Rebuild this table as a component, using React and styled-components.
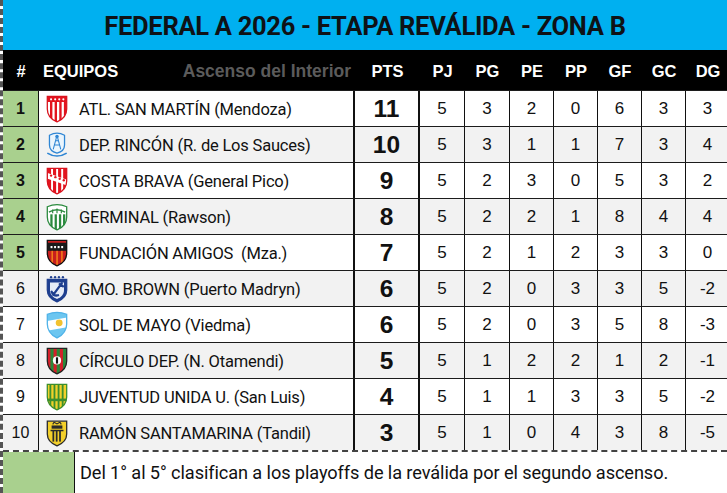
import React from "react";
import styled, { createGlobalStyle } from "styled-components";

const GlobalStyle = createGlobalStyle`
  html, body { margin: 0; padding: 0; background: #ffffff; }
  * { box-sizing: border-box; }
`;

const COLS = "36px 316px 65px 45px 45px 44px 44px 44px 44px 44px";

const Board = styled.div`
  width: 727px;
  height: 493px;
  display: flex;
  flex-direction: column;
  background: #ffffff;
  overflow: hidden;
  border-left: 3px dashed #555;
`;

const TitleBar = styled.div`
  height: 50px;
  background: #00b0f0;
  display: flex;
  align-items: center;
  justify-content: center;
  font-family: "Roboto", "Liberation Sans", sans-serif;
  font-weight: 700;
  font-size: 25.5px;
  letter-spacing: -0.3px;
  color: #0f1216;
  padding-top: 2px;
`;

const HeaderRow = styled.div`
  height: 40px;
  background: #000000;
  display: grid;
  grid-template-columns: ${COLS};
  align-items: center;
  font-family: "Liberation Sans", Arial, sans-serif;
  font-weight: 700;
  font-size: 16.5px;
  color: #ffffff;
`;

const HeadCell = styled.div`
  text-align: center;
  padding-top: 2px;
`;

const HeadTeam = styled.div`
  display: flex;
  justify-content: space-between;
  align-items: center;
  padding: 2px 4px 0 4px;
`;

const Muted = styled.span`
  color: #5b5b5b;
  font-size: 17.5px;
`;

const Row = styled.div`
  height: 36px;
  display: grid;
  grid-template-columns: ${COLS};
  background: ${(p) => (p.$even ? "#f2f2f2" : "#ffffff")};
  border-top: 1px solid #1c1c1c;
`;

const Cell = styled.div`
  display: flex;
  align-items: center;
  justify-content: center;
  border-right: 1px solid #111;
  font-family: "Liberation Sans", Arial, sans-serif;
  font-size: 17px;
  color: #111;
  padding-top: 1px;
`;

const PosCell = styled(Cell)`
  background: ${(p) => (p.$top ? "#a9d08e" : "transparent")};
  font-weight: ${(p) => (p.$top ? 700 : 400)};
  font-size: 16px;
`;

const TeamCell = styled(Cell)`
  justify-content: flex-start;
  padding-left: 6px;
  border-right: 2px solid #111;
  font-family: "Roboto", "Liberation Sans", sans-serif;
  font-size: 16.5px;
  letter-spacing: -0.2px;
  gap: 10px;
`;

const TeamName = styled.span`
  white-space: pre;
`;

const PtsCell = styled(Cell)`
  font-weight: 700;
  font-size: 24.5px;
  border-right: 2px solid #111;
`;

const CrestBox = styled.div`
  width: 24px;
  height: 30px;
  display: flex;
  align-items: center;
  justify-content: center;
  flex-shrink: 0;
  & > svg { width: 22px; height: 28px; flex-shrink: 0; }
`;

const Footer = styled.div`
  flex: 1;
  display: grid;
  grid-template-columns: 72px 1fr;
  border-top: 2px dashed #444;
`;

const FooterSwatch = styled.div`
  background: #a9d08e;
  border-right: 1px solid #111;
`;

const FooterText = styled.div`
  display: flex;
  align-items: center;
  padding-left: 5px;
  font-family: "Roboto", "Liberation Sans", sans-serif;
  font-size: 18.2px;
  letter-spacing: -0.1px;
  color: #111;
`;

const SHIELD = "M1 1.2 H19 V13 C19 19.5 15 23 10 25 C5 23 1 19.5 1 13 Z";
const SHIELD_ROUND = "M1 3.5 Q10 -0.5 19 3.5 V13 C19 19.5 15 23 10 25 C5 23 1 19.5 1 13 Z";

function Stripes({ color, xs, y = 0, h = 26, w = 2 }) {
  return xs.map((x) => <rect key={x} x={x} y={y} width={w} height={h} fill={color} />);
}

function Crest({ kind }) {
  const id = `clip-${kind}`;
  let body = null;
  let outline = "#111";
  let shape = SHIELD;
  switch (kind) {
    case 1:
      outline = "#d9131e";
      body = (
        <>
          <rect width="20" height="26" fill="#fff" />
          <Stripes color="#e3141f" xs={[3.5, 7.8, 12.1, 16.4]} w={2.2} />
          <rect width="20" height="6.5" fill="#e3141f" />
          {[4.5, 8.3, 12.1, 15.9].map((x) => (
            <circle key={x} cx={x} cy="4" r="1" fill="#fff" />
          ))}
        </>
      );
      break;
    case 2:
      outline = "#2f86d4";
      shape = "M3 4 Q10 0 17 4 V13 C17 17 14 19.5 10 20.5 C6 19.5 3 17 3 13 Z";
      body = (
        <>
          <rect width="20" height="26" fill="#eaf5fd" />
          <path d="M10 4 L6.5 17 M10 4 L13.5 17 M7.5 13 H12.5 M8.5 9 H11.5" stroke="#2f86d4" strokeWidth="1" fill="none" />
          <circle cx="10" cy="5" r="1.6" fill="#2f86d4" />
        </>
      );
      break;
    case 3:
      outline = "#d9131e";
      body = (
        <>
          <rect width="20" height="26" fill="#e3141f" />
          <Stripes color="#fff" xs={[4.5, 9.2, 13.9]} w={1.8} />
          <path d="M0 5 L20 12 L20 17.5 L0 10.5 Z" fill="#fff" />
          {[4.5, 8.5, 12.5, 16.3].map((x, i) => (
            <circle key={x} cx={x} cy={8 + i * 1.45} r="1.1" fill="#e3141f" />
          ))}
        </>
      );
      break;
    case 4:
      outline = "#2b8a3e";
      shape = SHIELD_ROUND;
      body = (
        <>
          <rect width="20" height="26" fill="#fff" />
          <Stripes color="#2b8a3e" xs={[3.8, 7.8, 11.8, 15.6]} y={10.5} h={16} w={2.1} />
          <path d="M2.5 8.5 Q10 4 17.5 8.5" stroke="#2b8a3e" strokeWidth="1.3" fill="none" />
          <path d="M6 6 V9.5 M10 5.2 V9.5 M14 6 V9.5" stroke="#2b8a3e" strokeWidth="1.1" />
        </>
      );
      break;
    case 5:
      outline = "#111";
      body = (
        <>
          <rect width="20" height="26" fill="#1a1a1a" />
          <rect y="11" width="20" height="15" fill="#c81e1e" />
          <Stripes color="#f27a1a" xs={[4.8, 9.3, 13.8]} y={11} h={15} w={1.5} />
          <rect y="6" width="20" height="3" fill="#1a1a1a" />
          {[4, 7.3, 10.6, 13.9].map((x) => (
            <rect key={x} x={x} y="6.5" width="1.8" height="2" fill="#fff" />
          ))}
          <rect y="1" width="20" height="2.5" fill="#c81e1e" />
        </>
      );
      break;
    case 6:
      outline = "#1f3f8f";
      shape = "M1 4 H19 V14 C19 19.5 15 23 10 25 C5 23 1 19.5 1 14 Z";
      body = (
        <>
          <rect width="20" height="26" fill="#1f3f8f" />
          <path d="M3.5 7 H16.5 V14 C16.5 18.5 13.5 21 10 22.3 C6.5 21 3.5 18.5 3.5 14 Z" fill="#e6ecf7" />
          <path d="M14.5 7.5 L6.5 18.5 M5 15.5 Q7 20 11 18.8 M12.5 8.5 L15.5 10.5" stroke="#1f3f8f" strokeWidth="2.1" fill="none" strokeLinecap="round" />
        </>
      );
      break;
    case 7:
      outline = "#4fb2e8";
      shape = "M1 3 Q10 -0.5 19 3 V12 C19 18.5 15 22.5 10 25 C5 22.5 1 18.5 1 12 Z";
      body = (
        <>
          <rect width="20" height="26" fill="#6cc6f0" />
          <path d="M0 9.5 L20 6 L20 15 L0 18.5 Z" fill="#ffffff" />
          <circle cx="12" cy="11" r="3.2" fill="#f2c230" />
        </>
      );
      break;
    case 8:
      outline = "#222";
      body = (
        <>
          <rect width="20" height="26" fill="#2a8a3a" />
          <Stripes color="#d3202a" xs={[1, 6.8, 12.6]} w={2.9} />
          <circle cx="10" cy="12.5" r="3.8" fill="#fff" />
          <rect x="9" y="9.6" width="2" height="5.8" fill="#111" />
        </>
      );
      break;
    case 9:
      outline = "#3c8f2e";
      body = (
        <>
          <rect width="20" height="26" fill="#f1d12b" />
          <Stripes color="#3c8f2e" xs={[3, 6.8, 10.6, 14.4]} w={1.7} />
          <rect y="14.5" width="20" height="2.4" fill="#3c8f2e" />
        </>
      );
      break;
    case 10:
      outline = "#2a2a2a";
      shape = "M1 2 H19 V14 C19 19.5 15 23 10 25 C5 23 1 19.5 1 14 Z";
      body = (
        <>
          <rect width="20" height="26" fill="#f3cf2a" />
          <rect x="5" y="6" width="10" height="3" fill="#2a2a2a" />
          <path d="M6 5 L7.3 3 L10 4.5 L12.7 3 L14 5" stroke="#2a2a2a" strokeWidth="1" fill="none" />
          <Stripes color="#2a2a2a" xs={[5.8, 8.9, 12]} y={11} h={10} w={1.6} />
          <rect x="4" y="10" width="12" height="1.4" fill="#2a2a2a" />
        </>
      );
      break;
    default:
      break;
  }
  return (
    <svg width="22" height="28" viewBox="0 0 20 26" aria-hidden="true">
      <defs>
        <clipPath id={id}>
          <path d={shape} />
        </clipPath>
      </defs>
      <g clipPath={`url(#${id})`}>{body}</g>
      <path d={shape} fill="none" stroke={outline} strokeWidth="1.2" />
      {kind === 2 && (
        <path d="M1 20.5 Q10 26 19 20.5" fill="none" stroke="#2f86d4" strokeWidth="1.5" />
      )}
      {kind === 6 &&
        [4.5, 8.2, 11.8, 15.5].map((x) => (
          <circle key={x} cx={x} cy="2" r="1.1" fill="#1f3f8f" />
        ))}
    </svg>
  );
}

const TEAMS = [
  ["ATL. SAN MARTÍN (Mendoza)", 11, 5, 3, 2, 0, 6, 3, 3],
  ["DEP. RINCÓN (R. de Los Sauces)", 10, 5, 3, 1, 1, 7, 3, 4],
  ["COSTA BRAVA (General Pico)", 9, 5, 2, 3, 0, 5, 3, 2],
  ["GERMINAL (Rawson)", 8, 5, 2, 2, 1, 8, 4, 4],
  ["FUNDACIÓN AMIGOS  (Mza.)", 7, 5, 2, 1, 2, 3, 3, 0],
  ["GMO. BROWN (Puerto Madryn)", 6, 5, 2, 0, 3, 3, 5, -2],
  ["SOL DE MAYO (Viedma)", 6, 5, 2, 0, 3, 5, 8, -3],
  ["CÍRCULO DEP. (N. Otamendi)", 5, 5, 1, 2, 2, 1, 2, -1],
  ["JUVENTUD UNIDA U. (San Luis)", 4, 5, 1, 1, 3, 3, 5, -2],
  ["RAMÓN SANTAMARINA (Tandil)", 3, 5, 1, 0, 4, 3, 8, -5],
];

const HEADS = ["PTS", "PJ", "PG", "PE", "PP", "GF", "GC", "DG"];

export default function App() {
  return (
    <>
      <GlobalStyle />
      <Board>
        <TitleBar>FEDERAL A 2026 - ETAPA REVÁLIDA - ZONA B</TitleBar>
        <HeaderRow>
          <HeadCell>#</HeadCell>
          <HeadTeam>
            <span>EQUIPOS</span>
            <Muted>Ascenso del Interior</Muted>
          </HeadTeam>
          {HEADS.map((h) => (
            <HeadCell key={h}>{h}</HeadCell>
          ))}
        </HeaderRow>
        {TEAMS.map(([name, pts, ...stats], i) => (
          <Row key={name} $even={i % 2 === 1}>
            <PosCell $top={i < 5}>{i + 1}</PosCell>
            <TeamCell>
              <CrestBox>
                <Crest kind={i + 1} />
              </CrestBox>
              <TeamName>{name}</TeamName>
            </TeamCell>
            <PtsCell>{pts}</PtsCell>
            {stats.map((s, j) => (
              <Cell key={j}>{s}</Cell>
            ))}
          </Row>
        ))}
        <Footer>
          <FooterSwatch />
          <FooterText>
            Del 1° al 5° clasifican a los playoffs de la reválida por el segundo ascenso.
          </FooterText>
        </Footer>
      </Board>
    </>
  );
}
